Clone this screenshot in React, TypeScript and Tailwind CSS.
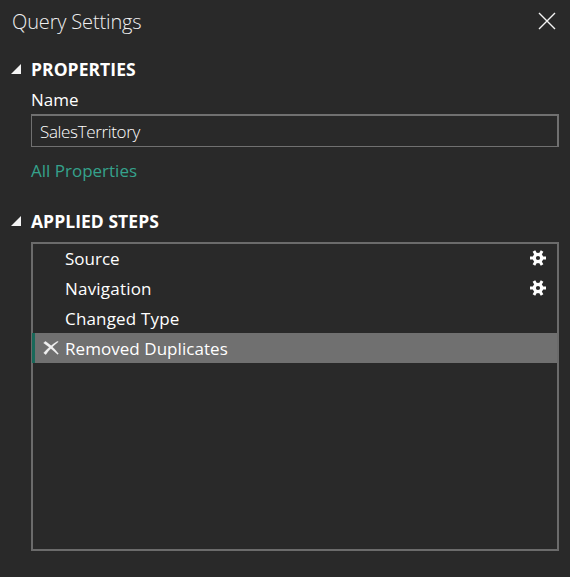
import React from "react";

type Step = { name: string; configurable?: boolean; selected?: boolean; tracking: string };

const steps: Step[] = [
  { name: "Source", configurable: true, tracking: "tracking-normal" },
  { name: "Navigation", configurable: true, tracking: "tracking-[0.2px]" },
  { name: "Changed Type", tracking: "tracking-[0.17px]" },
  { name: "Removed Duplicates", selected: true, tracking: "tracking-[0.05px]" },
];

function CloseIcon() {
  return (
    <svg className="-mt-0.5 h-[18px] w-[18px]" viewBox="0 0 18 18" fill="none" stroke="#f4f4f4" strokeWidth="1.4">
      <path d="M1 1 17 17M17 1 1 17" />
    </svg>
  );
}

function GearIcon() {
  return (
    <svg className="h-4 w-4 overflow-visible" viewBox="0 0 16 16" fill="none" stroke="#ffffff">
      <circle cx="8" cy="8" r="3.7" strokeWidth="3.2" />
      <path
        d="M0 8H4M12 8H16M3.9 0.9 6 4.5M10 11.5 12.1 15.1M12.1 0.9 10 4.5M6 11.5 3.9 15.1"
        strokeWidth="3"
      />
    </svg>
  );
}

function DeleteIcon() {
  return (
    <svg className="h-[14px] w-4" viewBox="0 0 16 14" fill="#f0f0f0" stroke="#f0f0f0" strokeWidth="0.2">
      <path d="M0.5 1.9 2.4 0.3C6 2.7 11.5 7.4 15.5 12.7L14.6 13.5C10.5 9.6 5.4 5.2 0.5 1.9Z" />
      <path d="M15.4 0.8 14.4 0.3C9.2 3.4 4.2 7.7 0.6 12L2.8 13.7C5.4 9.6 10 5 15.4 0.8Z" />
    </svg>
  );
}

function SectionHeader({ title }: { title: string }) {
  return (
    <div className="flex h-6 items-center">
      <svg className="ml-[11px] h-[10px] w-[10px]" viewBox="0 0 10 10" fill="#f4f4f4">
        <path d="M10 0V10H0Z" />
      </svg>
      <h2 className="ml-[10px] whitespace-nowrap text-[17.5px] font-bold tracking-[0.05px] text-white">{title}</h2>
    </div>
  );
}

export default function App() {
  return (
    <main className="flex h-[577px] w-[570px] flex-col overflow-hidden bg-[#292929] font-['Open_Sans','Noto_Sans',sans-serif] text-[17px] leading-6 text-white">
      <header className="flex h-[43px] items-center justify-between pl-3 pr-[14px]">
        <h1 className="whitespace-nowrap text-[20px] font-light tracking-[-0.15px] text-[#f0f0f0]">Query Settings</h1>
        <CloseIcon />
      </header>

      <section className="mt-[14px]">
        <SectionHeader title="PROPERTIES" />
        <div className="ml-[31px] mr-[11px]">
          <div className="mt-[7px] h-6">
            <label>Name</label>
          </div>
          <div className="mt-[2px] flex h-[33px] items-center border-b border-l border-r-2 border-t-2 border-[#707070] pl-[8px]">
            <span className="pt-px text-[17px] font-[350] tracking-[-0.35px]">SalesTerritory</span>
          </div>
          <div className="mt-[12px] h-6 text-[#35a28c]">
            <a>All Properties</a>
          </div>
        </div>
      </section>

      <section className="mt-[26px]">
        <SectionHeader title="APPLIED STEPS" />
        <ul className="ml-[31px] mr-[11px] mt-[9px] h-[309px] border-2 border-[#6b6b6b]">
          {steps.map((step) => (
            <li
              key={step.name}
              className={`flex h-[30px] items-center first:-mt-px ${
                step.selected ? "-ml-px border-l-[3px] border-[#19695a] bg-[#707070] pl-[8px]" : "pl-[10px]"
              }`}
            >
              <span className="w-[22px] shrink-0">{step.selected && <DeleteIcon />}</span>
              <span className={`whitespace-nowrap pt-px ${step.tracking}`}>{step.name}</span>
              {step.configurable && (
                <span className="ml-auto mr-[11px]">
                  <GearIcon />
                </span>
              )}
            </li>
          ))}
        </ul>
      </section>
    </main>
  );
}
